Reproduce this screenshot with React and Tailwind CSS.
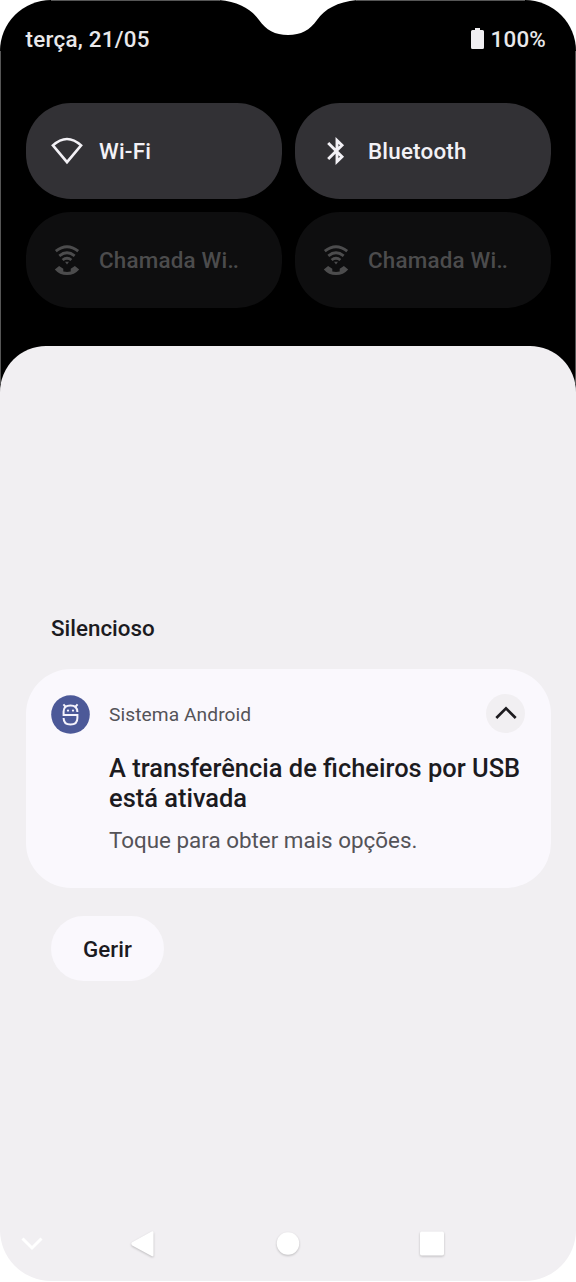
import React from "react";

function WifiIcon() {
  return (
    <svg width="32" height="28" viewBox="0 0 32 28" fill="none" stroke="#f3f1f6" strokeWidth="2.6" strokeLinejoin="miter">
      <path d="M1.9 8.4 Q16 -4.4 30.1 8.4 L16 25.2 Z" />
    </svg>
  );
}

function BluetoothIcon() {
  return (
    <svg width="18" height="28" viewBox="0 0 18 28" fill="none" stroke="#f3f1f6" strokeWidth="2.9" strokeLinejoin="miter">
      <path d="M1.2 6 L15 19.8 L10 24.6 V3.4 L15 8.2 L1.2 22" />
    </svg>
  );
}

function WifiCallIcon() {
  return (
    <svg width="26" height="30" viewBox="0 0 26 30" fill="none" stroke="#4c4c4d" strokeWidth="2.8">
      <path d="M1.8 6.2 Q13 -2.6 24.2 6.2" />
      <path d="M5.3 10.8 Q13 4.6 20.7 10.8" />
      <path d="M8.6 15 Q13 11.4 17.4 15" />
      <path d="M11 16.8 H15 L13 19.4 Z" fill="#4c4c4d" stroke="none" />
      <path
        d="M5.1 21 L9.3 23.8 V26.6 Q13 27.5 16.7 26.6 V23.8 L20.9 21 L25.2 24.4 Q20.5 29.9 13 29.9 Q5.5 29.9 0.8 24.4 Z"
        fill="#4c4c4d"
        stroke="none"
      />
    </svg>
  );
}

function Tile({ icon, children, disabled }) {
  return (
    <div
      className={
        "flex h-24 items-center rounded-[45px] pl-[25.5px] " +
        (disabled ? "bg-[#0e0e0f] text-[#4c4c4d]" : "bg-[#323135] text-[#f3f1f6]")
      }
    >
      <div className="flex w-8 justify-center pt-[1.5px]">{icon}</div>
      <span className="ml-4 pt-px text-[22.4px] font-medium leading-7 tracking-[0.2px]">{children}</span>
    </div>
  );
}

function TruncatedLabel() {
  return (
    <>
      Chamada Wi<span className="tracking-[-0.8px]">..</span>
    </>
  );
}

function SystemIcon() {
  return (
    <svg width="39" height="39" viewBox="0 0 39 39" fill="none" className="mt-[0.5px] shrink-0">
      <circle cx="19.5" cy="19.5" r="19.3" fill="#4c5998" />
      <g stroke="#f4f2fb" strokeWidth="2">
        <path d="M26.4 17 C26.4 12.4 24 10.4 19.5 10.4 C15 10.4 12.6 12.4 12.6 16.4 V20 H26.4 V23 C26.4 27.4 23.8 29.6 19.5 29.6 C15.2 29.6 12.6 27.4 12.6 23" />
        <path d="M12.4 9.4 L14.8 12 M26.6 9.4 L24.2 12" />
      </g>
      <circle cx="17" cy="15.6" r="1.15" fill="#f4f2fb" />
      <circle cx="22" cy="15.6" r="1.15" fill="#f4f2fb" />
    </svg>
  );
}

function StatusBar() {
  return (
    <div className="flex h-[78px] items-center justify-between pl-[25.6px] pr-[30px] pt-0.5 text-[22.4px] font-medium text-[#e9e8ea]">
      <span className="tracking-[0.25px]">terça, 21/05</span>
      <div className="flex items-center gap-[7px]">
        <svg width="13" height="21" viewBox="0 0 13 21" fill="#f1eff2" className="-mt-0.5">
          <path d="M4 0 H9 V2 H11.5 Q13 2 13 3.5 V19.5 Q13 21 11.5 21 H1.5 Q0 21 0 19.5 V3.5 Q0 2 1.5 2 H4 Z" />
        </svg>
        <span className="tracking-[0.2px]">100%</span>
      </div>
    </div>
  );
}

function Notification() {
  return (
    <section className="mx-[25.5px] mt-[27px] flex h-[219px] gap-[19px] rounded-[45px] bg-[#faf8fd] pl-[25.5px] pt-[25px]">
      <SystemIcon />
      <div className="flex-1">
        <div className="flex h-[39px] items-center justify-between pr-[25.5px]">
          <span className="pt-[3px] text-[19.2px] tracking-[0.07px] text-[#545358]">Sistema Android</span>
          <div className="flex size-[39px] items-center justify-center rounded-full bg-[#f1eff2]">
            <svg width="24" height="16" viewBox="0 0 24 16" fill="none" stroke="#1d1b1f" strokeWidth="2.7" className="-mt-[2px]">
              <path d="M2.3 13 L12 3.4 L21.7 13" />
            </svg>
          </div>
        </div>
        <h2 className="mt-[20px] whitespace-nowrap text-[25.45px] font-medium leading-[30px] text-[#1c1b1f]">
          A transferência de ficheiros por USB
          <br />
          está ativada
        </h2>
        <p className="mt-[13px] text-[22.4px] leading-[28px] text-[#545358]">Toque para obter mais opções.</p>
      </div>
    </section>
  );
}

function NavBar() {
  return (
    <svg width="576" height="76" viewBox="0 0 576 76" fill="#fff" className="block">
      <path d="M22.5 33.5 L32 43 L41.5 33.5" fill="none" stroke="#fff" strokeWidth="3" />
      <g className="drop-shadow-[0_1.5px_1px_rgba(0,0,0,0.22)]">
        <path d="M132.2 37.2 L151.6 26.4 Q153.5 25.6 153.5 27.4 V50 Q153.5 52 151.6 50.9 L132.2 40.4 Q130.4 38.8 132.2 37.2 Z" />
        <circle cx="288" cy="38.5" r="11.2" />
        <rect x="420" y="26.5" width="24" height="24" rx="1.8" />
      </g>
    </svg>
  );
}

export default function App() {
  return (
    <div className="h-[1282px] w-[576px] bg-white font-[Roboto,sans-serif]">
      <main className="relative flex h-[1281px] flex-col">
        <div className="h-[346px] rounded-t-[51px] bg-black">
          <StatusBar />
          <div className="mt-[24.5px] grid grid-cols-2 gap-[13px] px-[25.5px]">
            <Tile icon={<WifiIcon />}>Wi-Fi</Tile>
            <Tile icon={<BluetoothIcon />}>Bluetooth</Tile>
            <Tile icon={<WifiCallIcon />} disabled>
              <TruncatedLabel />
            </Tile>
            <Tile icon={<WifiCallIcon />} disabled>
              <TruncatedLabel />
            </Tile>
          </div>
        </div>
        <div className="flex flex-1 flex-col bg-[linear-gradient(#000_60px,transparent_60px)]">
          <div className="flex flex-1 flex-col rounded-b-[51px] rounded-t-[46px] bg-[#f1eff2]">
            <h1 className="mt-[268px] pl-[51px] text-[22.4px] font-medium leading-[28px] text-[#1c1b1f]">Silencioso</h1>
            <Notification />
            <button className="ml-[51px] mt-[28px] h-[65px] w-[113px] rounded-[33px] bg-[#faf8fd] pt-0.5 text-[22.4px] font-medium text-[#1c1b1f]">
              Gerir
            </button>
            <div className="mt-auto">
              <NavBar />
            </div>
          </div>
        </div>
        <svg width="576" height="390" viewBox="0 0 576 390" fill="none" className="pointer-events-none absolute left-0 top-0">
          <path d="M0.5 51 V384 M575.5 51 V384 M51 0.5 H220 M356 0.5 H525" stroke="#565656" />
          <path d="M219 0 C239 2 251 9 259 20 C266 30 275 35 288 35 C301 35 310 30 317 20 C325 9 337 2 357 0 Z" fill="#fff" />
        </svg>
      </main>
    </div>
  );
}
